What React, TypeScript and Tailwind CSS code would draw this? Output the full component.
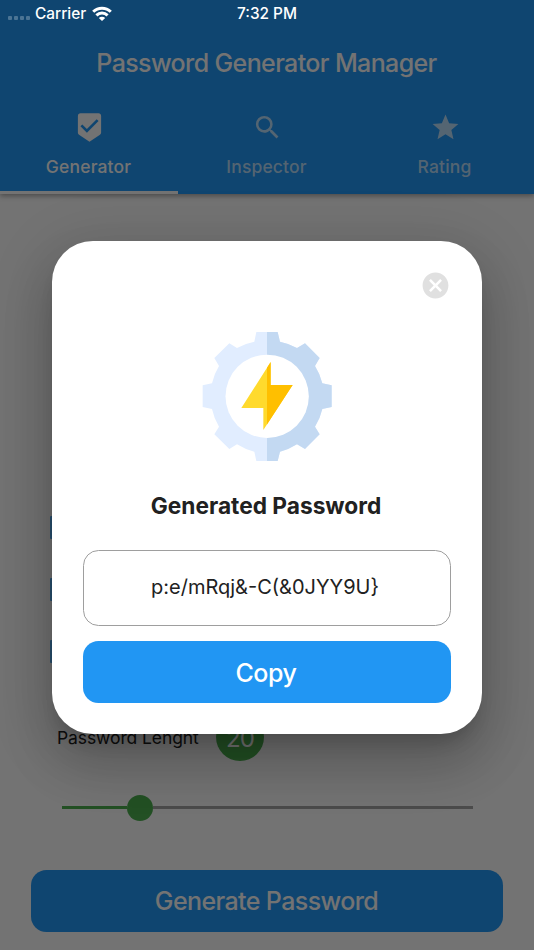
import React from 'react';
import type { IconType } from 'react-icons';
import { MdBeenhere, MdCancel, MdSearch, MdStar } from 'react-icons/md';

interface Tab {
  label: string;
  icon: IconType;
}

const tabs: Tab[] = [
  { label: 'Generator', icon: MdBeenhere },
  { label: 'Inspector', icon: MdSearch },
  { label: 'Rating', icon: MdStar },
];

const StatusBar: React.FC = () => (
  <div className="absolute inset-x-0 top-0 z-20 flex h-[27px] items-center justify-center text-[15.4px] font-medium text-white">
    <div className="absolute left-2 top-0 flex h-[27px] items-center">
      <div className="mt-[8px] flex gap-[2px] opacity-25">
        {[0, 1, 2, 3].map((dot) => (
          <span key={dot} className="h-1 w-1 rounded-[1px] bg-white" />
        ))}
      </div>
      <span className="ml-[5px]">Carrier</span>
      <svg className="mb-px ml-[6px] h-[15px] w-5" viewBox="0 0 20 15" fill="none" stroke="#fff" strokeWidth="3">
        <path d="M1.2 5.8C6.2.9 13.8.9 18.8 5.8" />
        <path d="M4.4 9.3C7.6 6.2 12.4 6.2 15.6 9.3" />
        <path d="M10 15 6.8 11.9C8.6 10.2 11.4 10.2 13.2 11.9Z" fill="#fff" stroke="none" />
      </svg>
    </div>
    <span>7:32 PM</span>
  </div>
);

const Header: React.FC = () => (
  <header className="flex h-[194px] shrink-0 flex-col bg-[#2196f3] pt-[29px] text-[#fafafa] shadow-[0_2px_5px_rgba(0,0,0,0.35)]">
    <h1 className="flex h-[69px] items-center justify-center pr-px text-[25px] font-medium tracking-[-0.62px]">
      Password Generator Manager
    </h1>
    <nav className="flex flex-1">
      {tabs.map(({ label, icon: Icon }, index) => (
        <button
          key={label}
          className={`flex flex-1 flex-col items-center border-b-[3px] pt-[14px] ${
            index === 0 ? 'border-[#fafafa]' : 'border-transparent text-[#fafafa]/70'
          }`}
        >
          <Icon size={31} />
          <span className="mt-[10px] pr-px text-[17.5px] leading-[28px] font-medium tracking-[0.15px]">{label}</span>
        </button>
      ))}
    </nav>
  </header>
);

const GeneratorPage: React.FC = () => (
  <main className="flex flex-1 flex-col px-[31px] pb-[18px]">
    <div className="mt-[322px] ml-[19px] flex flex-col gap-[39px]">
      {[0, 1, 2].map((option) => (
        <span key={option} className="size-[23px] rounded-[1px] bg-[#2196f3]/75" />
      ))}
    </div>
    <div className="mt-[50px] ml-[26px] flex h-12 items-center">
      <span className="w-[159px] pt-[2px] text-[17.5px] tracking-[-0.1px] text-[#212121]">Password Lenght</span>
      <span className="flex size-12 items-center justify-center rounded-full bg-[#4caf50] pt-[3px] text-[24px] tracking-[-1px] text-white">
        20
      </span>
    </div>
    <div className="mt-[33.5px] mr-[30px] ml-[31px] flex h-[26px] items-center">
      <span className="h-[3px] w-[65px] bg-[#4caf50]" />
      <span className="size-[26px] rounded-full bg-[#4caf50]" />
      <span className="h-[3px] flex-1 bg-[#a3a3a3]" />
    </div>
    <button className="mt-auto h-[62px] rounded-[15.5px] bg-[#2196f3] pt-px pr-[8px] pl-[7px] text-[25px] font-medium tracking-[-0.6px] text-[#fafafa]">
      Generate Password
    </button>
  </main>
);

const GEAR_PATH =
  'M199 36H263L270 65A169 169 0 0 1 321 84L345 70 389 114 375 138A169 169 0 0 1 397 190L425 196V261L397 267A169 169 0 0 1 375 320L389 343 345 387 321 373A169 169 0 0 1 270 395L263 423H199L193 395A169 169 0 0 1 141 373L118 387 73 343 87 320A169 169 0 0 1 66 267L38 261V196L66 190A169 169 0 0 1 87 138L73 114 118 70 141 84A169 169 0 0 1 193 65Z';
const BOLT_PATH = 'M242 126V195H308L220 330V264H154Z';

const GearIcon: React.FC = () => (
  <svg className="h-[129px] w-[130px]" viewBox="36 36 390 387">
    <defs>
      <clipPath id="rightHalf">
        <rect x="231" y="30" width="200" height="400" />
      </clipPath>
    </defs>
    <path d={GEAR_PATH} fill="#e1edff" />
    <path d={GEAR_PATH} fill="#c3d9f2" clipPath="url(#rightHalf)" />
    <circle cx="231.5" cy="229" r="125" fill="#fff" />
    <path d={BOLT_PATH} fill="#ffda2d" />
    <path d={BOLT_PATH} fill="#ffbf00" clipPath="url(#rightHalf)" />
  </svg>
);

const PasswordDialog: React.FC = () => (
  <div className="absolute inset-0 z-10 bg-black/54 px-[52px] pt-[241px]">
    <div
      role="dialog"
      className="flex h-[493px] flex-col items-center rounded-[41px] bg-white px-[31px] pt-[29px] text-[#212121] shadow-[0_14px_19px_-9px_rgba(0,0,0,0.2),0_31px_49px_4px_rgba(0,0,0,0.14),0_12px_59px_10px_rgba(0,0,0,0.12)]"
    >
      <button className="self-end text-[#e0e0e0]" aria-label="Close">
        <MdCancel size={31} />
      </button>
      <div className="mt-[31px]">
        <GearIcon />
      </div>
      <h2 className="mt-[30px] pr-[2px] text-[22.7px] leading-[30px] font-bold">Generated Password</h2>
      <div className="mt-[29px] flex h-[76px] w-full items-center justify-center rounded-[15.5px] border border-[#9e9e9e] pr-1 pb-[2px] text-[20px]">
        {'p:e/mRqj&-C(&0JYY9U}'}
      </div>
      <button className="mt-[15.4px] h-[62px] w-full rounded-[15.5px] bg-[#2196f3] pt-[2px] pr-[8px] pl-[6px] text-[25px] font-medium tracking-[-0.4px] text-white">
        Copy
      </button>
    </div>
  </div>
);

const App: React.FC = () => (
  <div className="relative flex h-[950px] w-[534px] flex-col overflow-hidden bg-[#fafafa] font-['Inter','Liberation_Sans',sans-serif]">
    <StatusBar />
    <Header />
    <GeneratorPage />
    <PasswordDialog />
  </div>
);

export default App;
